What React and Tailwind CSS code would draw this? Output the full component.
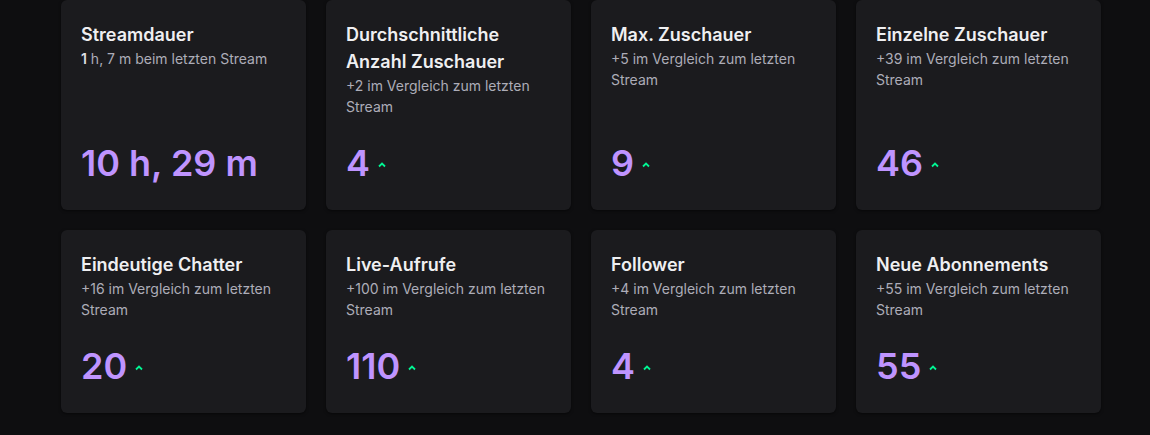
import React from 'react';

const stats = [
  { title: 'Streamdauer', sub: <><span className="font-semibold text-[#dedee3]">1</span> h, 7 m beim letzten Stream</>, value: '10 h, 29 m', up: false },
  { title: 'Durchschnittliche Anzahl Zuschauer', sub: '+2 im Vergleich zum letzten Stream', value: '4', up: true },
  { title: 'Max. Zuschauer', sub: '+5 im Vergleich zum letzten Stream', value: '9', up: true },
  { title: 'Einzelne Zuschauer', sub: '+39 im Vergleich zum letzten Stream', value: '46', up: true },
  { title: 'Eindeutige Chatter', sub: '+16 im Vergleich zum letzten Stream', value: '20', up: true },
  { title: 'Live-Aufrufe', sub: '+100 im Vergleich zum letzten Stream', value: '110', up: true },
  { title: 'Follower', sub: '+4 im Vergleich zum letzten Stream', value: '4', up: true },
  { title: 'Neue Abonnements', sub: '+55 im Vergleich zum letzten Stream', value: '55', up: true },
];

function UpArrow() {
  return (
    <svg width="8" height="6" viewBox="0 0 8 6" className="mt-[4px]">
      <path d="M1 4.5 L4 1.5 L7 4.5" fill="none" stroke="#00f593" strokeWidth="1.8" />
    </svg>
  );
}

function StatCard({ stat }) {
  return (
    <div className="flex flex-col rounded-md bg-[#1b1b1e] px-5 pt-[21px] pb-[25px] shadow-[0_1px_3px_rgba(0,0,0,0.5)]">
      <h3 className="text-[18px] font-semibold leading-[27px] text-[#efeff1]">{stat.title}</h3>
      <p className="text-[14px] leading-[21px] text-[#adadb8]">{stat.sub}</p>
      <div className="mt-auto flex items-center gap-2 pt-6">
        <span className="text-[36px] font-semibold leading-[44px] text-[#bf94ff]">{stat.value}</span>
        {stat.up && <UpArrow />}
      </div>
    </div>
  );
}

export default function App() {
  return (
    <div className="min-h-[435px] w-full bg-[#0e0e10] font-['Inter',sans-serif]">
      <div className="grid grid-cols-[repeat(4,245px)] gap-5 pl-[61px]">
        {stats.map((s) => (
          <StatCard key={s.title} stat={s} />
        ))}
      </div>
    </div>
  );
}
